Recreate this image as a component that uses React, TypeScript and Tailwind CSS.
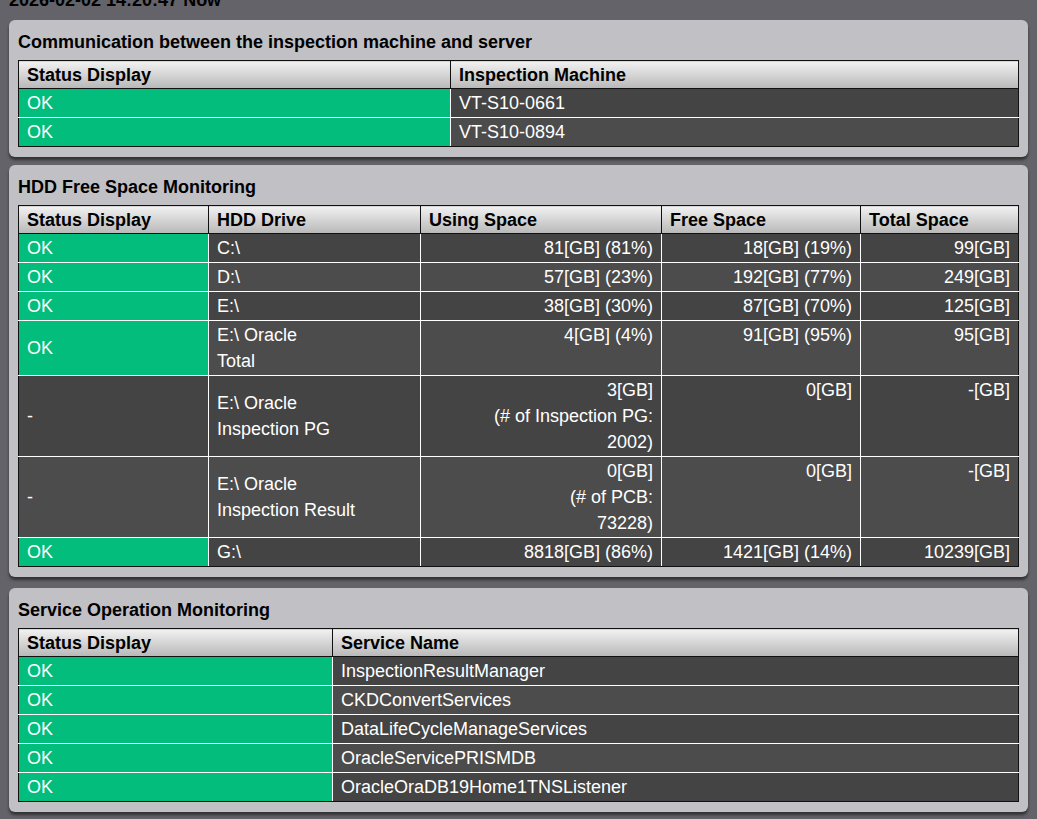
import React from "react";

const G = "bg-[#02bd7b]";
type Cell = { t: React.ReactNode; ok?: boolean; right?: boolean; top?: boolean };

function Table({ cols, rows }: { cols: { h: string; w: string }[]; rows: Cell[][] }) {
  return (
    <table className="w-full border-collapse table-fixed text-[18px] leading-[26px]">
      <colgroup>
        {cols.map((c, i) => (
          <col key={i} style={{ width: c.w }} />
        ))}
      </colgroup>
      <thead>
        <tr>
          {cols.map((c, i) => (
            <th key={i} className="border border-[#111] bg-gradient-to-b from-[#f2f2f2] to-[#b8b8b8] text-left font-bold text-black px-2 h-[28px] py-0">
              {c.h}
            </th>
          ))}
        </tr>
      </thead>
      <tbody>
        {rows.map((r, ri) => (
          <tr key={ri}>
            {r.map((c, ci) => (
              <td
                key={ci}
                className={`border border-white border-t-0 first:border-l-[#111] last:border-r-[#111] px-2 py-px text-white ${ri === rows.length - 1 ? "border-b-[#111]" : ""} ${c.ok ? G : ri % 2 ? "bg-[#4c4c4c]" : "bg-[#444444]"} ${c.right ? "text-right" : "text-left"} ${c.top ? "align-top" : "align-middle"}`}
              >
                {c.t}
              </td>
            ))}
          </tr>
        ))}
      </tbody>
    </table>
  );
}

function Panel({ title, children }: { title: string; children: React.ReactNode }) {
  return (
    <div className="mx-[9px] rounded-[6px] bg-[#c1c1c5] px-[9px] pt-[10px] pb-[10px] shadow-[0_3px_3px_rgba(0,0,0,0.5)]">
      <div className="font-bold text-[18px] leading-[24px] text-black mb-[6px]">{title}</div>
      {children}
    </div>
  );
}

export default function App() {
  const hdd = (s: string, d: React.ReactNode, u: React.ReactNode, f: string, t: string): Cell[] => [
    { t: s, ok: s === "OK" },
    { t: d },
    { t: u, right: true, top: true },
    { t: f, right: true, top: true },
    { t: t, right: true, top: true },
  ];
  const hcols = [
    { h: "Status Display", w: "190px" },
    { h: "HDD Drive", w: "212px" },
    { h: "Using Space", w: "241px" },
    { h: "Free Space", w: "199px" },
    { h: "Total Space", w: "158px" },
  ];
  const services = ["InspectionResultManager", "CKDConvertServices", "DataLifeCycleManageServices", "OracleServicePRISMDB", "OracleOraDB19Home1TNSListener"];
  return (
    <div className="min-h-[819px] bg-[#646369] font-[Liberation_Sans,Arial,sans-serif] overflow-hidden" style={{ fontFamily: '"Liberation Sans", Arial, sans-serif' }}>
      <div className="font-bold text-[18px] leading-[20px] text-black px-[9px] mt-[-10px] h-[30px]">2026-02-02 14:20:47 Now</div>
      <div className="flex flex-col gap-[8px]">
        <Panel title="Communication between the inspection machine and server">
          <Table
            cols={[{ h: "Status Display", w: "432px" }, { h: "Inspection Machine", w: "568px" }]}
            rows={[
              [{ t: "OK", ok: true }, { t: "VT-S10-0661" }],
              [{ t: "OK", ok: true }, { t: "VT-S10-0894" }],
            ]}
          />
        </Panel>
        <Panel title="HDD Free Space Monitoring">
          <Table
            cols={hcols}
            rows={[
              hdd("OK", "C:\\", "81[GB] (81%)", "18[GB] (19%)", "99[GB]"),
              hdd("OK", "D:\\", "57[GB] (23%)", "192[GB] (77%)", "249[GB]"),
              hdd("OK", "E:\\", "38[GB] (30%)", "87[GB] (70%)", "125[GB]"),
              hdd("OK", <>E:\ Oracle<br />Total</>, "4[GB] (4%)", "91[GB] (95%)", "95[GB]"),
              hdd("-", <>E:\ Oracle<br />Inspection PG</>, <>3[GB]<br />(# of Inspection PG:<br />2002)</>, "0[GB]", "-[GB]"),
              hdd("-", <>E:\ Oracle<br />Inspection Result</>, <>0[GB]<br />(# of PCB:<br />73228)</>, "0[GB]", "-[GB]"),
              hdd("OK", "G:\\", "8818[GB] (86%)", "1421[GB] (14%)", "10239[GB]"),
            ]}
          />
        </Panel>
        <div className="mt-[3px]">
          <Panel title="Service Operation Monitoring">
            <Table
              cols={[{ h: "Status Display", w: "314px" }, { h: "Service Name", w: "686px" }]}
              rows={services.map((s) => [{ t: "OK", ok: true }, { t: s }])}
            />
          </Panel>
        </div>
        <div className="mx-[9px] rounded-t-[6px] bg-[#c1c1c5] h-[40px]" />
      </div>
    </div>
  );
}
